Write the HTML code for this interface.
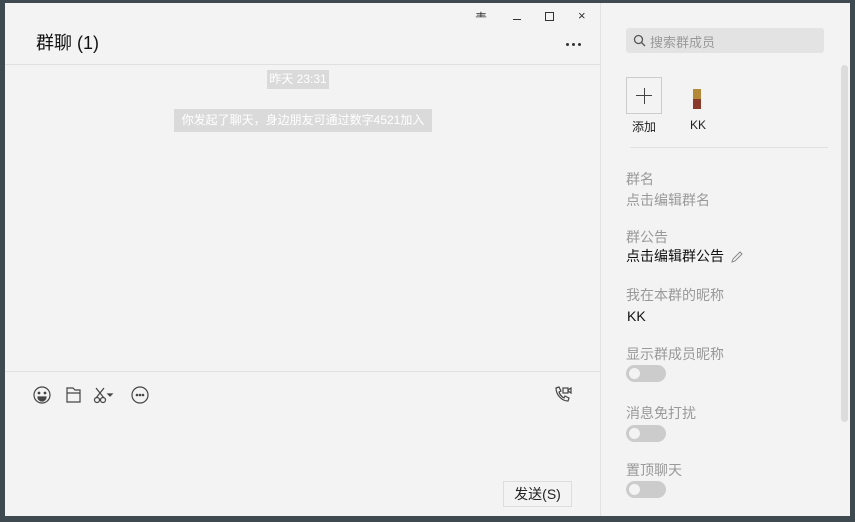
<!DOCTYPE html><html><head><meta charset="utf-8"><style>
*{margin:0;padding:0;box-sizing:border-box}
body{width:855px;height:522px;background:#3f4a50;position:relative;overflow:hidden;font-family:"Liberation Sans","Noto Sans CJK SC",sans-serif}
.win{position:absolute;left:5px;top:3px;width:845px;height:513px;background:#f3f3f3}
.a{position:absolute}
.t{font-size:13px;color:#999}
.tog{position:absolute;width:40px;height:17px;border-radius:9px;background:#ccc}
.tog:after{content:"";position:absolute;left:3px;top:3px;width:11px;height:11px;border-radius:50%;background:#f3f3f3}
.dot{position:absolute;width:3px;height:3px;border-radius:50%;background:#333;top:40px}
</style></head><body><div class="win">
<div class="a" style="left:595px;top:0;width:1px;height:513px;background:#e3e3e3"></div>
<div class="a" style="left:31px;top:26px;font-size:18px;color:#111">群聊 (1)</div>
<div class="a" style="left:470px;top:6px;font-size:12px;color:#333">龶</div>
<div class="a" style="left:508px;top:16px;width:8px;height:1px;background:#333"></div>
<div class="a" style="left:540px;top:9px;width:9px;height:9px;border:1px solid #333"></div>
<div class="a" style="left:573px;top:5px;font-size:13px;color:#333">×</div>
<div class="dot" style="left:561px"></div><div class="dot" style="left:567px"></div><div class="dot" style="left:573px"></div>
<div class="a" style="left:0;top:61px;width:595px;height:1px;background:#e0e0e0"></div>
<div class="a" style="left:262px;top:67px;width:62px;height:19px;background:#dadada;color:#fff;font-size:12px;text-align:center;line-height:19px">昨天 23:31</div>
<div class="a" style="left:169px;top:106px;width:258px;height:23px;background:#dadada;color:#fff;font-size:12px;text-align:center;line-height:23px">你发起了聊天，身边朋友可通过数字4521加入</div>
<div class="a" style="left:0;top:368px;width:595px;height:1px;background:#e0e0e0"></div>
<svg class="a" style="left:27px;top:382px" width="130" height="20" fill="none" stroke="#444" stroke-width="1.2">
<circle cx="10" cy="10" r="8"/><circle cx="7" cy="8" r=".8" fill="#444"/><circle cx="13" cy="8" r=".8" fill="#444"/><path d="M6 12h8a4 4 0 0 1-8 0z" fill="#444"/>
<path d="M35 3h6l2 2h5v12h-13z M35 8h13"/>
<path d="M64 3l8 10M72 3l-8 10"/><circle cx="65" cy="15" r="2.5"/><circle cx="71" cy="15" r="2.5"/><path d="M76 9l2 2 2-2z" fill="#444"/>
<circle cx="108" cy="10" r="8"/><circle cx="105" cy="10" r=".7" fill="#444"/><circle cx="108" cy="10" r=".7" fill="#444"/><circle cx="111" cy="10" r=".7" fill="#444"/>
</svg>
<svg class="a" style="left:548px;top:382px" width="20" height="20" fill="none" stroke="#444" stroke-width="1.2"><path d="M3 3l3 -1 2 4-2 1c1 3 3 5 5 6l1-2 4 2-1 3c-6 0-12-6-12-13z"/><rect x="10" y="3" width="5" height="5"/><path d="M15 5l3-2v5l-3-2"/></svg>
<div class="a" style="left:498px;top:478px;width:69px;height:26px;border:1px solid #ddd;font-size:14px;color:#222;text-align:center;line-height:24px">发送(S)</div>
<div class="a" style="left:621px;top:25px;width:198px;height:25px;background:#e3e3e3;border-radius:3px"></div>
<svg class="a" style="left:628px;top:31px" width="14" height="14" fill="none" stroke="#555" stroke-width="1.3"><circle cx="5.5" cy="5.5" r="4"/><path d="M8.5 8.5l3.5 3.5"/></svg>
<div class="a" style="left:645px;top:29px;font-size:13px;color:#999">搜索群成员</div>
<div class="a" style="left:621px;top:74px;width:36px;height:37px;border:1px solid #ccc"></div>
<div class="a" style="left:631px;top:92px;width:16px;height:1px;background:#444"></div>
<div class="a" style="left:638.5px;top:85px;width:1px;height:16px;background:#444"></div>
<div class="a" style="left:627px;top:115px;font-size:12px;color:#222">添加</div>
<div class="a" style="left:688px;top:86px;width:8px;height:20px;background:linear-gradient(#b48a3a 0 50%,#8a3a2a 50%)"></div>
<div class="a" style="left:685px;top:115px;font-size:12px;color:#222">KK</div>
<div class="a" style="left:625px;top:144px;width:198px;height:1px;background:#e0e0e0"></div>
<div class="a t" style="left:621px;top:166px;font-size:14px">群名</div>
<div class="a t" style="left:621px;top:187px;font-size:14px">点击编辑群名</div>
<div class="a t" style="left:621px;top:224px;font-size:14px">群公告</div>
<div class="a" style="left:621px;top:243px;font-size:14px;color:#111">点击编辑群公告</div>
<svg class="a" style="left:725px;top:247px" width="14" height="14" fill="none" stroke="#888"><path d="M2 12l1-3 7-7 2 2-7 7z"/></svg>
<div class="a t" style="left:621px;top:282px;font-size:14px">我在本群的昵称</div>
<div class="a" style="left:622px;top:305px;font-size:14px;color:#111">KK</div>
<div class="a t" style="left:621px;top:341px;font-size:14px">显示群成员昵称</div>
<div class="tog" style="left:621px;top:362px"></div>
<div class="a t" style="left:621px;top:400px;font-size:14px">消息免打扰</div>
<div class="tog" style="left:621px;top:422px"></div>
<div class="a t" style="left:621px;top:457px;font-size:14px">置顶聊天</div>
<div class="tog" style="left:621px;top:478px"></div>
<div class="a" style="left:836px;top:62px;width:7px;height:357px;background:#dcdcdc;border-radius:4px"></div>
</div></body></html>
